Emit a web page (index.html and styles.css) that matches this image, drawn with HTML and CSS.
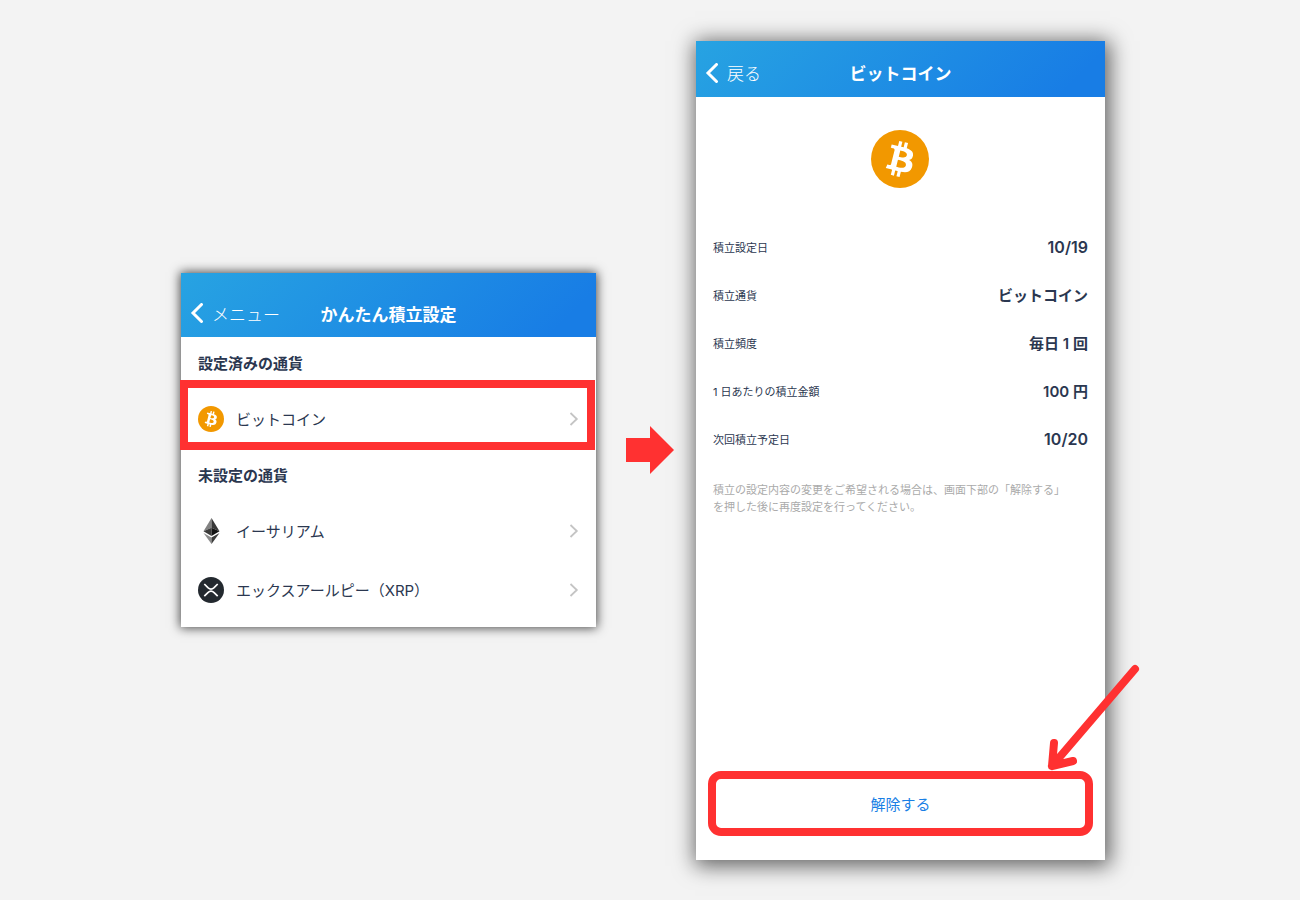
FILE: index.html
```html
<!DOCTYPE html>
<html lang="ja">
<head>
    <meta charset="UTF-8">
    <meta name="viewport" content="width=device-width, initial-scale=1.0">
    <title>かんたん積立設定</title>
    <link rel="stylesheet" href="styles.css">
</head>
<body>
    <svg class="sprite" aria-hidden="true">
        <symbol id="icon-btc" viewBox="0 0 32 32">
            <circle cx="16" cy="16" r="16" fill="#f29800"/>
            <path fill="#fff" d="M23.189 14.02c.314-2.096-1.283-3.223-3.465-3.975l.708-2.84-1.728-.43-.69 2.765c-.454-.114-.92-.22-1.385-.326l.695-2.783L15.596 6l-.708 2.839c-.376-.086-.746-.17-1.104-.26l.002-.009-2.384-.595-.46 1.846s1.283.294 1.256.312c.7.175.826.638.805 1.006l-.806 3.235c.048.012.11.03.18.057l-.183-.045-1.13 4.532c-.086.212-.303.531-.793.41.018.025-1.256-.313-1.256-.313l-.858 1.978 2.25.561c.418.105.828.215 1.231.318l-.715 2.872 1.727.43.708-2.84c.472.127.93.245 1.378.357l-.706 2.828 1.728.43.715-2.866c2.948.558 5.164.333 6.097-2.333.752-2.146-.037-3.385-1.588-4.192 1.13-.26 1.98-1.003 2.207-2.538zm-3.95 5.538c-.533 2.147-4.148.986-5.32.695l.95-3.805c1.172.293 4.929.872 4.37 3.11zm.535-5.569c-.487 1.953-3.495.96-4.47.717l.86-3.45c.975.243 4.118.696 3.61 2.733z"/>
        </symbol>
        <symbol id="icon-back" viewBox="0 0 14 20">
            <path d="M11.500 1.500L3 10l8.500 8.500" fill="none" stroke="#fff" stroke-width="3" stroke-linecap="round"/>
        </symbol>
        <symbol id="icon-next" viewBox="0 0 10 14">
            <path d="M1.500 1L7.800 7l-6.300 6" fill="none" stroke="#c4c4c4" stroke-width="1.800"/>
        </symbol>
    </svg>

    <main class="steps">
        <section class="card card-list">
            <header class="bar bar-list">
                <a href="#" class="back"><svg class="back-icon"><use href="#icon-back"/></svg>メニュー</a>
                <h1>かんたん積立設定</h1>
            </header>
            <h2>設定済みの通貨</h2>
            <ul>
                <li class="marked">
                    <a href="#detail" class="coin">
                        <svg class="coin-icon"><use href="#icon-btc"/></svg>
                        <span>ビットコイン</span>
                        <svg class="next"><use href="#icon-next"/></svg>
                    </a>
                </li>
            </ul>
            <h2>未設定の通貨</h2>
            <ul>
                <li>
                    <a href="#" class="coin">
                        <svg class="coin-icon" viewBox="0 0 26 26">
                            <path fill="#828282" d="M13.500 0L5.500 13.300l8-3.600z"/>
                            <path fill="#383838" d="M13.500 0v9.700l8 3.600z"/>
                            <path fill="#3c3c3b" d="M13.500 9.700l-8 3.600 8 4.700z"/>
                            <path fill="#141414" d="M13.500 9.700v8.300l8-4.700z"/>
                            <path fill="#8c8c8c" d="M5.500 14.900l8 11.100v-6.400z"/>
                            <path fill="#3c3c3b" d="M13.500 19.600V26l8-11.100z"/>
                        </svg>
                        <span>イーサリアム</span>
                        <svg class="next"><use href="#icon-next"/></svg>
                    </a>
                </li>
                <li>
                    <a href="#" class="coin">
                        <svg class="coin-icon" viewBox="0 0 26 26">
                            <circle cx="13" cy="13" r="13" fill="#23292f"/>
                            <path d="M6.300 7l3.600 3.600q3.100 2.900 6.200 0L19.700 7M6.300 19.200l3.600-3.600q3.100-2.900 6.200 0l3.600 3.600" fill="none" stroke="#fff" stroke-width="1.700"/>
                        </svg>
                        <span>エックスアールピー（XRP）</span>
                        <svg class="next"><use href="#icon-next"/></svg>
                    </a>
                </li>
            </ul>
        </section>

        <svg class="step-arrow" viewBox="0 0 48 48" aria-hidden="true">
            <path fill="#ff3131" d="M0 12h24V0l24 24-24 24V36H0z"/>
        </svg>

        <section class="card card-detail" id="detail">
            <header class="bar bar-detail">
                <a href="#" class="back"><svg class="back-icon"><use href="#icon-back"/></svg>戻る</a>
                <h1>ビットコイン</h1>
            </header>
            <div class="detail">
                <svg class="detail-icon"><use href="#icon-btc"/></svg>
                <dl>
                    <div class="row"><dt>積立設定日</dt><dd class="num">10/19</dd></div>
                    <div class="row"><dt>積立通貨</dt><dd>ビットコイン</dd></div>
                    <div class="row"><dt>積立頻度</dt><dd>毎日 1 回</dd></div>
                    <div class="row"><dt>1 日あたりの積立金額</dt><dd>100 円</dd></div>
                    <div class="row"><dt>次回積立予定日</dt><dd class="num">10/20</dd></div>
                </dl>
                <p class="note">積立の設定内容の変更をご希望される場合は、画面下部の「解除する」<br>を押した後に再度設定を行ってください。</p>
                <div class="release">
                    <button type="button">解除する</button>
                    <svg class="pointer" viewBox="0 0 94 108" aria-hidden="true">
                        <path d="M88 5L5 102M7 79L5 102l21-5" fill="none" stroke="#ff3131" stroke-width="8" stroke-linecap="round" stroke-linejoin="round"/>
                    </svg>
                </div>
            </div>
        </section>
    </main>
</body>
</html>
```

FILE: styles.css
```css
* {
    box-sizing: border-box;
    margin: 0;
    padding: 0;
}
body {
    font-family: Inter, "Noto Sans CJK JP", sans-serif;
    font-size: 15px;
    background-color: #f3f3f3;
    color: #2b3750;
}
a {
    color: inherit;
    text-decoration: none;
}
ul {
    list-style: none;
}
.sprite {
    position: absolute;
    width: 0;
    height: 0;
}
.steps {
    display: grid;
    grid-template-columns: 69fr 56px 68fr;
    column-gap: 22px;
    align-items: center;
    min-height: 100vh;
    padding: 20px 195px 20px 181px;
}
.step-arrow {
    width: 48px;
    height: 48px;
    justify-self: end;
}
.card {
    background-color: #fff;
}
.card-list {
    padding-bottom: 7px;
    box-shadow: 0 0 10px 1px rgba(0, 0, 0, 0.7);
}
.card-detail {
    display: flex;
    flex-direction: column;
    min-height: 91vh;
    box-shadow: 2px 3px 20px 3px rgba(0, 0, 0, 0.6);
}

/* header bar */
.bar {
    display: grid;
    grid-template-columns: 1fr auto 1fr;
    align-items: center;
    padding: 0 9px;
    color: #fff;
    background: linear-gradient(135deg, #27a3e2 0%, #187de5 90%);
}
.bar-list {
    height: 64px;
    padding-top: 16px;
}
.bar-detail {
    height: 56px;
    padding-top: 8px;
}
.bar h1 {
    font-size: 17px;
    font-weight: 600;
}
.back {
    display: flex;
    align-items: center;
    gap: 8px;
    font-size: 17px;
    font-weight: 300;
}
.back-icon {
    width: 14px;
    height: 20px;
}

/* currency list */
h2 {
    padding: 0 17px;
    font-size: 15px;
    font-weight: 600;
    line-height: 53px;
}
.coin {
    display: flex;
    align-items: center;
    gap: 12px;
    height: 59px;
    padding: 0 17px 2px;
}
.coin-icon {
    width: 26px;
    height: 26px;
}
.next {
    width: 10px;
    height: 14px;
    margin-left: auto;
}
.marked {
    position: relative;
}
.marked::after {
    content: "";
    position: absolute;
    inset: -10px 1px -1px -1px;
    border: 8px solid #ff3131;
    pointer-events: none;
}

/* detail screen */
.detail {
    flex: 1;
    display: flex;
    flex-direction: column;
    padding: 33px 17px 31px;
}
.detail-icon {
    align-self: center;
    width: 58px;
    height: 58px;
    margin-bottom: 35px;
}
.row {
    display: flex;
    align-items: center;
    justify-content: space-between;
    height: 48px;
}
dt {
    font-size: 11px;
}
dd {
    font-size: 15px;
    font-weight: 600;
}
.num {
    font-size: 16px;
}
.note {
    margin-top: 19px;
    font-size: 11px;
    line-height: 17px;
    color: #aaa;
}
.release {
    position: relative;
    margin-top: auto;
}
.release button {
    display: block;
    width: 100%;
    height: 51px;
    border: 0;
    border-top: 1px solid #1a7fe5;
    background-color: #fff;
    color: #1a7fe5;
    font: inherit;
    cursor: pointer;
}
.release::after {
    content: "";
    position: absolute;
    inset: -7px -5px;
    border: 8px solid #ff3131;
    border-radius: 13px;
    pointer-events: none;
}
.pointer {
    position: absolute;
    z-index: 1;
    right: -53px;
    bottom: 57px;
    width: 94px;
    height: 108px;
    pointer-events: none;
}
```
